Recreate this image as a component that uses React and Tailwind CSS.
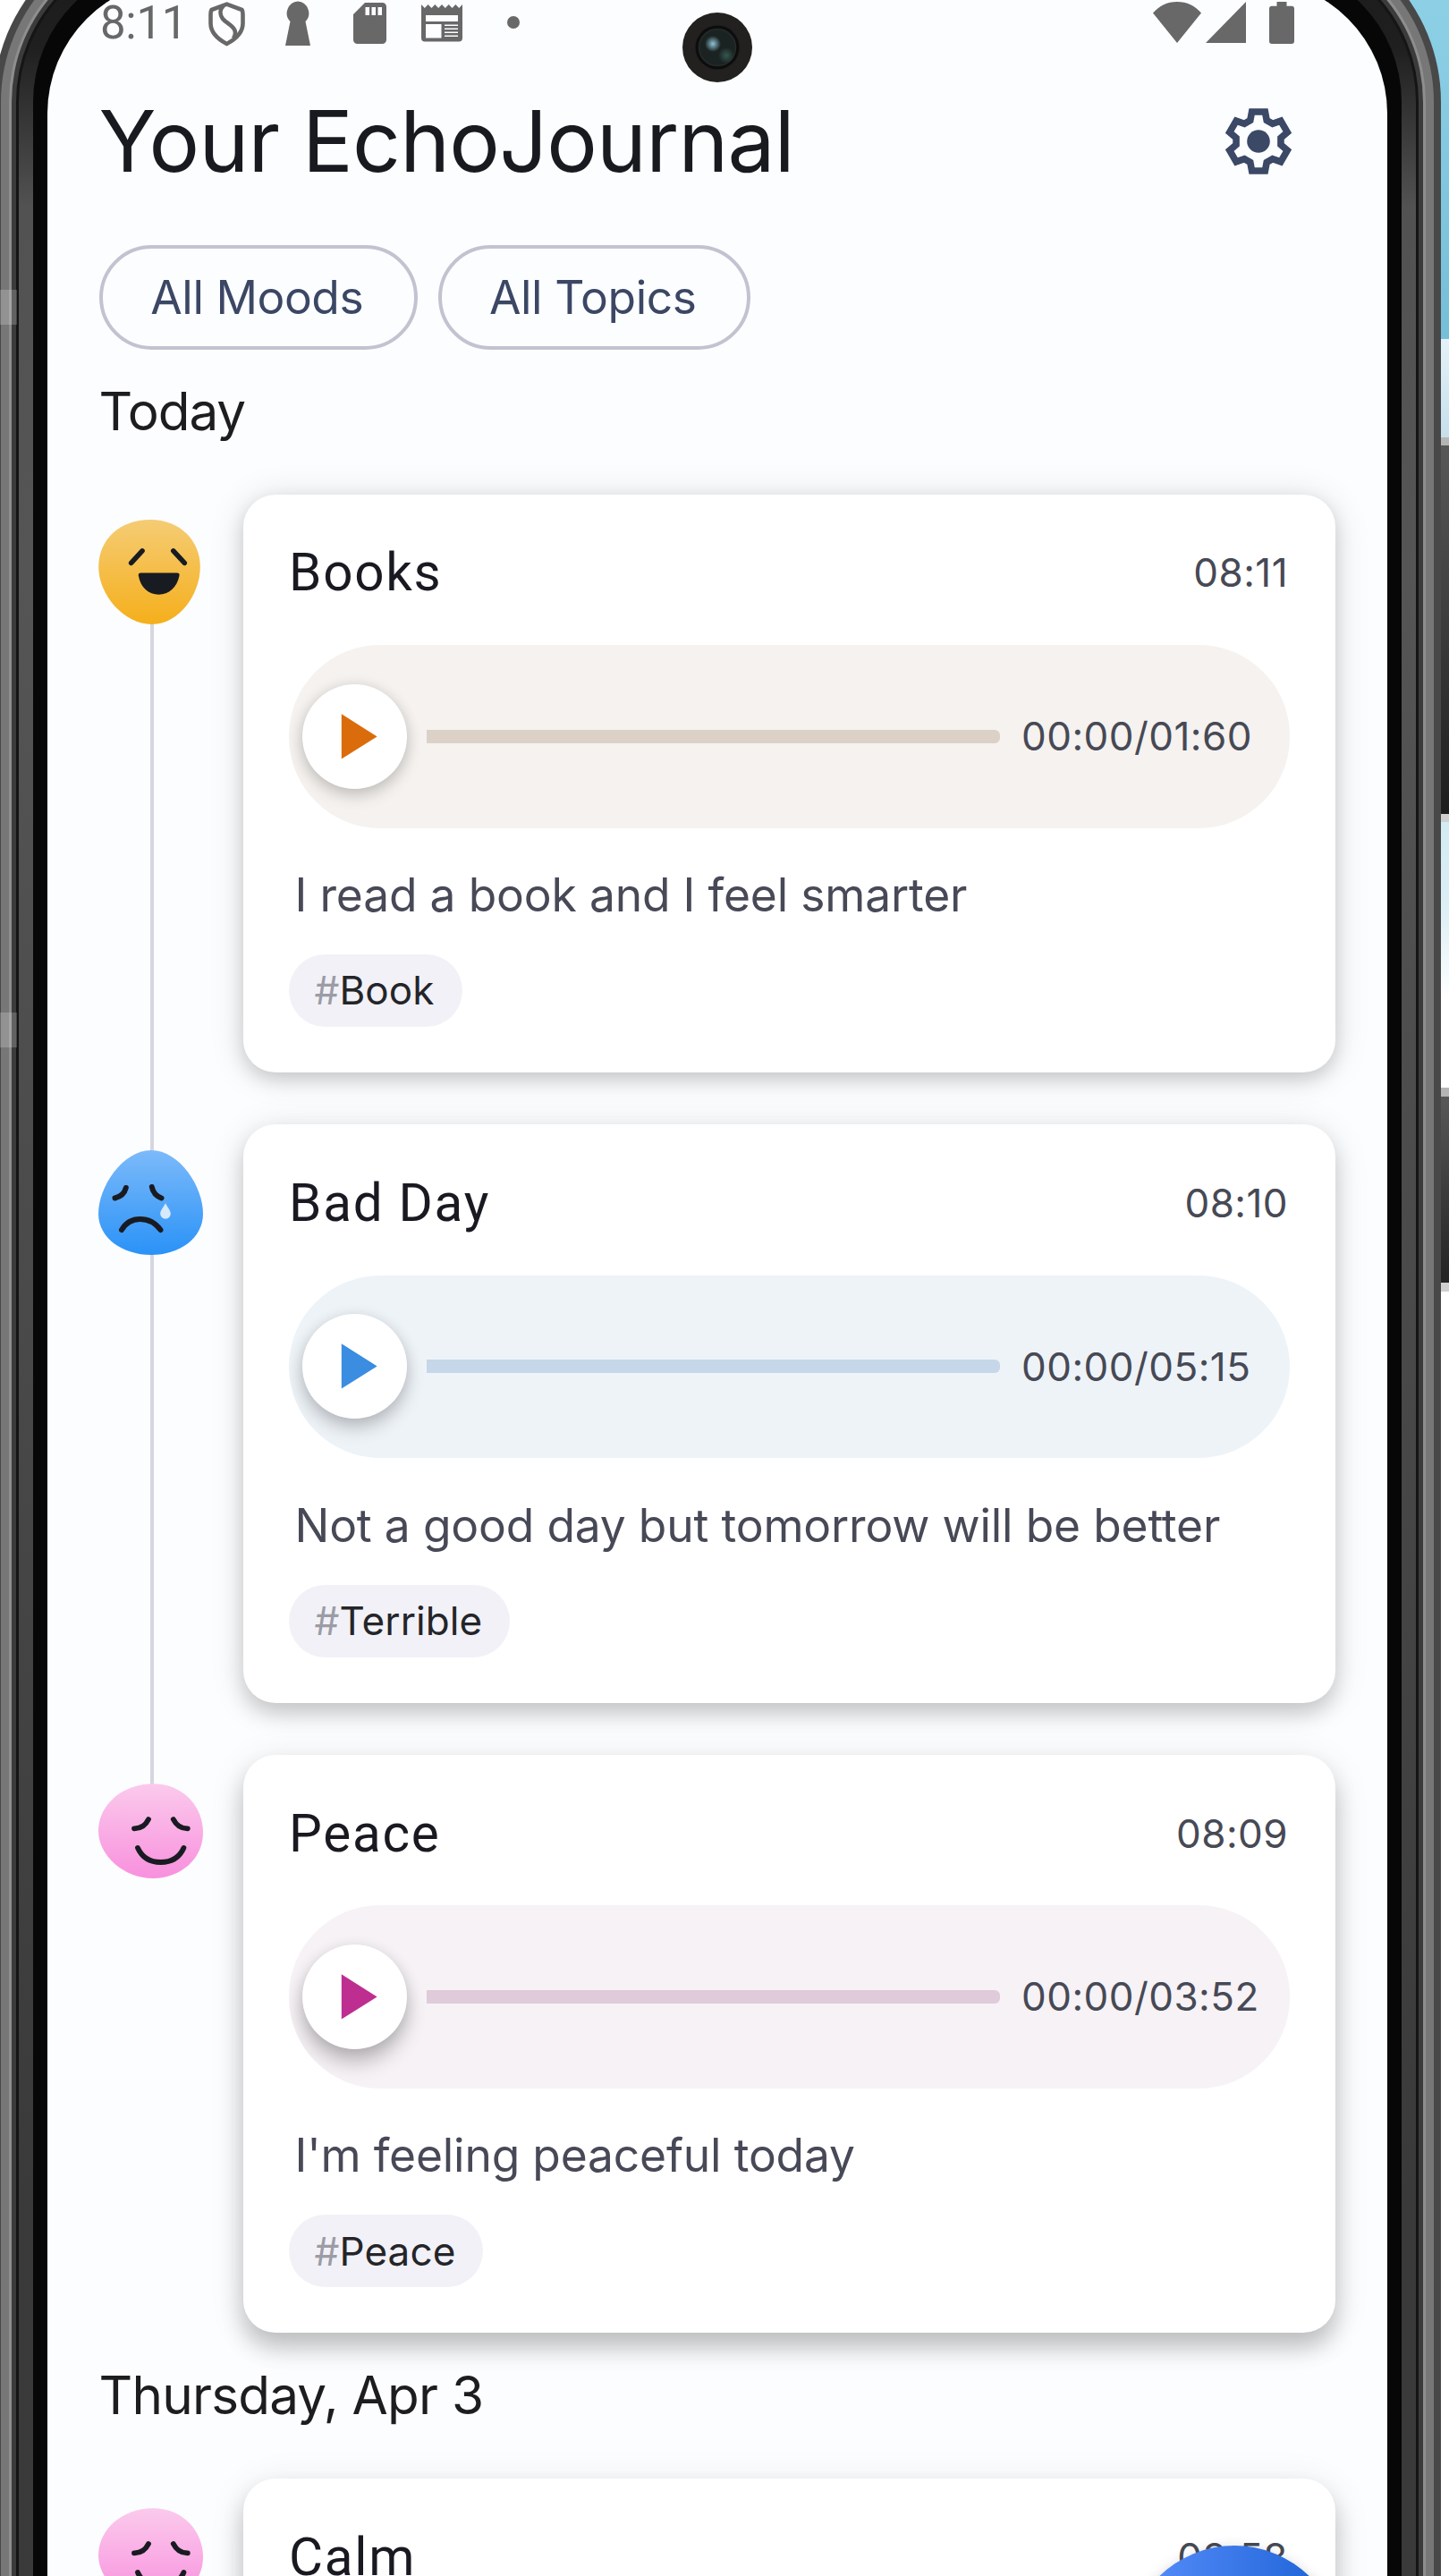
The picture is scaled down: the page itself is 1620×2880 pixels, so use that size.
import React from "react";

const INK = "#191b22";

function HappyFace() {
  return (
    <svg viewBox="0 0 117 117.4" className="relative block h-[117px] w-[117px] overflow-visible">
      <defs>
        <linearGradient id="happy" x1="0" y1="0" x2="0" y2="1">
          <stop offset="0" stopColor="#f5cc74" />
          <stop offset="1" stopColor="#f5af1b" />
        </linearGradient>
      </defs>
      <path d="M58 0C92 0 114 24 114 53C114 84 90 117.4 60 117.4C28 117.4 0 84 0 53C0 22 24 0 58 0Z" fill="url(#happy)" />
      <g stroke={INK} strokeWidth="5.6" strokeLinecap="round">
        <path d="M36.6 48.5L49 35" />
        <path d="M83.9 35L96.4 48.5" />
      </g>
      <path d="M47.5 59.7H88Q91.2 59.7 90.6 63C88 76 79 84 67.5 84C56 84 47 76 44.8 63Q44.2 59.7 47.5 59.7Z" fill={INK} />
    </svg>
  );
}

function SadFace() {
  return (
    <svg viewBox="0 0 117 117" className="relative block h-[117px] w-[117px] overflow-visible">
      <defs>
        <linearGradient id="sad" x1="0" y1="0" x2="0" y2="1">
          <stop offset="0" stopColor="#7cbafa" />
          <stop offset="1" stopColor="#2a92f7" />
        </linearGradient>
      </defs>
      <path d="M59 0C91 0 117 41 117 71C117 98 91 117 59 117C27 117 0 98 0 71C0 41 27 0 59 0Z" fill="url(#sad)" />
      <g stroke={INK} strokeWidth="6" strokeLinecap="round" fill="none">
        <path d="M18.5 53.5Q28.5 51 30.8 42" />
        <path d="M59.8 41Q61.5 50 70.5 53.5" />
        <path d="M26 89C31 80.5 38 77 46.5 77C56 77 64 81.5 69.5 89" />
      </g>
      <path d="M75 59C77 63.5 80.8 67 80.8 71A5.8 5.8 0 0 1 69.2 71C69.2 67 73 63.5 75 59Z" fill="#d6e9fd" />
    </svg>
  );
}

function PeacefulFace() {
  return (
    <svg viewBox="0 0 117 117" className="relative block h-[117px] w-[117px] overflow-visible">
      <defs>
        <linearGradient id="peaceful" x1="0" y1="0" x2="0" y2="1">
          <stop offset="0" stopColor="#fbcaec" />
          <stop offset="1" stopColor="#f890de" />
        </linearGradient>
      </defs>
      <path d="M61 4.3C95 4.3 117 30 117 59C117 88 92 110 61 110C28 110 0 84 0 57C0 27 28 4.3 61 4.3Z" fill="url(#peaceful)" />
      <g stroke={INK} strokeWidth="5.8" strokeLinecap="round" fill="none">
        <path d="M40 54.3Q51 54.5 56 44" />
        <path d="M83.8 44Q89 54.5 99.8 54.3" />
        <path d="M44 76C49 87 58 92 69.6 92C81 92 90.5 87 95.4 76" />
      </g>
    </svg>
  );
}

const gearPoints = [0, 60, 120, 180, 240, 300]
  .flatMap((deg) => {
    const a = (deg * Math.PI) / 180;
    return [
      [-9.2, -23.5],
      [-7.4, -33],
      [7.4, -33],
      [9.2, -23.5],
    ].map(([x, y]) => {
      const px = x * Math.cos(a) - y * Math.sin(a);
      const py = x * Math.sin(a) + y * Math.cos(a);
      return px.toFixed(2) + "," + py.toFixed(2);
    });
  })
  .join(" ");

function Gear() {
  return (
    <svg viewBox="-38 -38 76 76" className="h-[76px] w-[76px]">
      <polygon points={gearPoints} fill="none" stroke="#3b4866" strokeWidth="7.6" strokeLinejoin="miter" />
      <circle r="12.8" fill="#3b4866" />
    </svg>
  );
}

const moods = {
  happy: {
    Face: HappyFace,
    track: "bg-[#f5f2ef]",
    bar: "bg-[#dbd1c7]",
    play: "fill-[#db6c0b]",
    lift: "shadow-[0_8px_18px_rgba(0,0,0,0.16),0_1px_16px_rgba(0,0,0,0.10)]",
  },
  sad: {
    Face: SadFace,
    track: "bg-[#eef3f8]",
    bar: "bg-[#c5d7e8]",
    play: "fill-[#3a8de0]",
    lift: "shadow-[0_11px_20px_rgba(0,0,0,0.19),0_2px_16px_rgba(0,0,0,0.10)]",
  },
  peaceful: {
    Face: PeacefulFace,
    track: "bg-[#f6f2f6]",
    bar: "bg-[#dfcbd9]",
    play: "fill-[#bd2e90]",
    lift: "shadow-[0_15px_22px_rgba(0,0,0,0.23),0_2px_16px_rgba(0,0,0,0.10)]",
  },
};

const shadows = {
  low: "shadow-[0_8px_20px_rgba(0,0,0,0.15),0_3px_40px_rgba(0,0,0,0.12)]",
  mid: "shadow-[0_12px_22px_rgba(0,0,0,0.16),0_5px_40px_rgba(0,0,0,0.11)]",
  high: "shadow-[0_17px_26px_rgba(0,0,0,0.20),0_7px_40px_rgba(0,0,0,0.10)]",
};

const today = [
  { title: "Books", time: "08:11", length: "01:60", text: "I read a book and I feel smarter", tag: "Book", mood: "happy", shadow: "low" },
  { title: "Bad Day", time: "08:10", length: "05:15", text: "Not a good day but tomorrow will be better", tag: "Terrible", mood: "sad", shadow: "mid" },
  { title: "Peace", time: "08:09", length: "03:52", text: "I'm feeling peaceful today", tag: "Peace", mood: "peaceful", shadow: "high" },
];

const earlier = [{ title: "Calm", time: "08:58", mood: "peaceful", shadow: "high" }];

function Entry({ entry, first, last }) {
  const { Face, track, bar, play, lift } = moods[entry.mood];
  return (
    <div className="flex">
      <div className="-ml-px flex w-[162px] shrink-0 flex-col">
        <div className={first ? "h-[28.6px] w-1" : "-mb-1.5 ml-[58.5px] h-[34.6px] w-1 bg-[#d5d6e0]"} />
        <Face />
        {!last && <div className="-mt-px ml-[58.5px] w-1 flex-1 bg-[#d5d6e0]" />}
      </div>
      <div className={last ? "flex-1" : "flex-1 pb-[58.2px]"}>
        <article className={"flex h-[646.4px] flex-col items-start rounded-[36px] bg-white px-[51.5px] pt-[51.3px] " + shadows[entry.shadow]}>
          <div className="flex h-[73px] w-full items-center justify-between pt-px">
            <h3 className="font-[Roboto,sans-serif] text-[58.4px] leading-[73px] tracking-[1.75px] text-[#191a21]">{entry.title}</h3>
            <span className="pr-[1.5px] text-[44px] leading-[73px] tracking-[0.45px] text-[#474955]">{entry.time}</span>
          </div>
          {entry.length && (
            <>
              <div className={"mt-11 flex h-[204.7px] w-full items-center overflow-hidden rounded-[102px] pl-[15px] " + track}>
                <div className={"flex size-[117px] shrink-0 items-center justify-center rounded-full bg-white " + lift}>
                  <svg viewBox="0 0 117 117" className={"size-full " + play}>
                    <path d="M43.8 33.2L83.6 58.4L43.8 83.6Z" />
                  </svg>
                </div>
                <div className={"ml-[22px] h-[15px] w-[641px] shrink-0 rounded-r-[6px] " + bar} />
                <span className="ml-6 whitespace-nowrap text-[44px] leading-none tracking-[0.45px] text-[#474955]">00:00/{entry.length}</span>
              </div>
              <p className="mt-[39.5px] whitespace-nowrap pl-[6.5px] text-[51.5px] leading-[70px] tracking-[-0.17px] text-[#474957]">{entry.text}</p>
              <div className="mt-[31.8px] flex h-[81px] items-center rounded-full bg-[#f2f1f7] pr-[31px] pl-[28.5px] text-[44px] leading-none tracking-[0.1px] text-[#242529]">
                <span className="text-[#9b9ca5]">#</span>
                {entry.tag}
              </div>
            </>
          )}
        </article>
      </div>
    </div>
  );
}

function StatusBar() {
  return (
    <div className="flex h-[78px] items-start pt-[23px] text-[#686868]">
      <span className="ml-[1.5px] w-[120.5px] font-[Roboto,sans-serif] text-[51px] leading-[52px] tracking-[-0.3px]">8:11</span>
      <svg viewBox="0 0 41 50" className="mt-0.5 h-[50px] w-[41px]" fill="none" stroke="currentColor" strokeWidth="4.600">
        <path d="M20.5 2.6L37.5 9C38.3 10 38.500 12 38.500 14V24C38.500 34 30 42 20.5 47C11 42 2.5 34 2.5 24V14C2.5 12 2.700 10 3.5 9Z" />
        <path d="M17 4C12 9 13 15 16 19C20 24 27 26 29.5 32C30.5 35 30 38 28 41" />
      </svg>
      <svg viewBox="0 0 28 50" className="mt-px ml-[45px] h-[50px] w-7" fill="currentColor">
        <path d="M14 0.5A13.3 13.3 0 0 1 22.500 23L28 50H0L5.500 23A13.3 13.3 0 0 1 14 0.5Z" />
      </svg>
      <svg viewBox="0 0 37 46" className="mt-[3px] ml-12 h-[46px] w-[37px]" fill="currentColor" fillRule="evenodd">
        <path d="M13 0H32.5A4.5 4.5 0 0 1 37 4.5V41.5A4.5 4.5 0 0 1 32.5 46H4.5A4.5 4.5 0 0 1 0 41.5V13ZM13.5 5V14H18V5ZM20.5 5V14H25V5ZM27.5 5V14H32V5Z" />
      </svg>
      <svg viewBox="0 0 46 42" className="mt-[5px] ml-[39px] h-[42px] w-[46px]" fill="currentColor" fillRule="evenodd">
        <path d="M0 0L3.8 4L7.6 0L11.5 4L15.3 0L19.2 4L23 0L26.8 4L30.7 0L34.5 4L38.4 0L42.2 4L46 0V37.5A4 4 0 0 1 42 41.5H4A4 4 0 0 1 0 37.5ZM5 12V19H41V12ZM5 22V37.5H22.5V22ZM26 22.5V24H41V22.5ZM26 26.5V28H41V26.5ZM26 30.5V32H41V30.5ZM26 34.5V36H41V34.5Z" />
      </svg>
      <div className="mt-[18px] ml-[50px] size-3.5 rounded-full bg-current" />
      <div className="ml-auto flex items-start pr-[46.500px]">
        <svg viewBox="0 0 54 46" className="mt-0.5 h-[46px] w-[54px]" fill="currentColor">
          <path d="M27 46L0 12.5C7 4.5 16 0 27 0C38 0 47 4.5 54 12.5Z" />
        </svg>
        <svg viewBox="0 0 45 46" className="mt-0.5 ml-[5px] h-[46px] w-[45px]" fill="currentColor">
          <path d="M45 0V46H0Z" />
        </svg>
        <svg viewBox="0 0 28 47" className="mt-0.5 ml-[26px] h-[47px] w-7" fill="currentColor">
          <path d="M8.5 0H19.5V4.7H25A3 3 0 0 1 28 7.7V44A3 3 0 0 1 25 47H3A3 3 0 0 1 0 44V7.7A3 3 0 0 1 3 4.7H8.5Z" />
        </svg>
      </div>
    </div>
  );
}

function Screen() {
  return (
    <main className="h-[2910px] w-full overflow-hidden rounded-t-[150px] bg-[#fcfdff] pr-[58px] pl-[57.5px]">
      <StatusBar />
      <header className="flex h-[205px] items-center justify-between pr-[48px]">
        <h1 className="pt-0.5 text-[94.4px] leading-none tracking-[-0.75px] text-[#191a20]">Your EchoJournal</h1>
        <Gear />
      </header>
      <div className="mt-[13.7px] flex gap-[22.5px]">
        <button className="flex h-[117px] w-[356.5px] items-center justify-center rounded-full border-4 border-[#c2c3d0] pt-0.5 pr-[3px] text-[51.5px] leading-none tracking-[-0.45px] text-[#3b4764]">All Moods</button>
        <button className="flex h-[117px] w-[349.5px] items-center justify-center rounded-full border-4 border-[#c2c3d0] pt-0.5 pr-[3px] text-[51.5px] leading-none tracking-[-0.4px] text-[#3b4764]">All Topics</button>
      </div>
      <h2 className="mt-[30px] text-[58.4px] leading-[78px] tracking-[-1px] text-[#1d1d20]">Today</h2>
      <section className="mt-[54px]">
        {today.map((e, i) => (
          <Entry key={e.title} entry={e} first={i === 0} last={i === today.length - 1} />
        ))}
      </section>
      <h2 className="relative mt-[31px] text-[58.4px] leading-[78px] tracking-[-0.77px] text-[#1d1d20]">Thursday, Apr 3</h2>
      <section className="mt-[53.7px]">
        {earlier.map((e) => (
          <Entry key={e.title} entry={e} first last={false} />
        ))}
      </section>
    </main>
  );
}

function Camera() {
  return (
    <svg viewBox="-39 -39 78 78" className="absolute top-3.5 left-[763px] size-[78px]">
      <defs>
        <radialGradient id="glint">
          <stop offset="0" stopColor="#8fc3d6" />
          <stop offset="1" stopColor="#8fc3d6" stopOpacity="0" />
        </radialGradient>
        <radialGradient id="reflection">
          <stop offset="0" stopColor="#35594f" />
          <stop offset="1" stopColor="#35594f" stopOpacity="0" />
        </radialGradient>
      </defs>
      <circle r="39" fill="#23211f" />
      <circle r="24.5" fill="#0d0d0d" />
      <circle r="20.5" fill="#1b2322" stroke="#262b2b" strokeWidth="1.5" />
      <circle cx="-5" cy="-4" r="9" fill="url(#glint)" />
      <circle cx="10" cy="9" r="9" fill="url(#reflection)" />
    </svg>
  );
}

function Backdrop() {
  return (
    <div className="absolute inset-y-0 right-0 flex w-[120px] flex-col bg-white">
      <div className="h-[379px] bg-gradient-to-b from-[#8dd0e6] to-[#76bfd9]" />
      <div className="h-[110px] bg-gradient-to-b from-[#e4f2f8] to-[#c6e0ec]" />
      <div className="h-[430px] border-y-[9px] border-t-[#b5b5b5] border-b-[#cfcfcf] bg-gradient-to-b from-[#585858] via-[#3c3c3c] to-[#1d1d1d]" />
      <div className="h-[198px] bg-gradient-to-b from-[#d3ebf3] via-[#dcf0f5] to-white" />
      <div className="mt-[99px] h-[228px] border-y-[10px] border-t-[#b5b5b5] border-b-[#cfcfcf] bg-gradient-to-b from-[#585858] to-[#242424]" />
    </div>
  );
}

export default function App() {
  return (
    <div className="relative h-[2880px] w-[1620px] overflow-hidden bg-white font-[Inter,sans-serif]">
      <Backdrop />
      <div className="relative -mt-[86px] -ml-[7px] w-[1618px] rounded-t-[200px] bg-[#484848] px-2 pt-2">
        <div className="rounded-t-[192px] bg-[#777777] px-[9px] pt-[9px]">
          <div className="rounded-t-[183px] bg-[#8e8e8e] px-[3px] pt-[3px]">
            <div className="rounded-t-[180px] bg-[#3b3b3b] px-[5px] pt-[5px]">
              <div className="rounded-t-[175px] bg-[#151515] px-[3px] pt-[3px]">
                <div className="rounded-t-[172px] bg-[linear-gradient(to_bottom,#1b1b1b_0px,#1f1f1f_110px,#525252_290px,#555555_700px,#4a4a4a_1500px,#3a3a3a_2500px)] px-4 pt-4">
                  <div className="rounded-t-[156px] bg-[#070707] px-[16px] pt-[19px]">
                    <Screen />
                  </div>
                </div>
              </div>
            </div>
          </div>
        </div>
      </div>
      <div className="absolute top-[324px] left-0 h-[39px] w-[19px] bg-white/20" />
      <div className="absolute top-[1132px] left-0 h-[39px] w-[19px] bg-white/20" />
      <Camera />
      <button aria-label="New entry" className="absolute top-[2846px] left-[1259.5px] size-[240px] rounded-full bg-gradient-to-r from-[#5a90fd] to-[#1560d4] shadow-[0_4px_16px_rgba(0,0,0,0.2)]" />
    </div>
  );
}
